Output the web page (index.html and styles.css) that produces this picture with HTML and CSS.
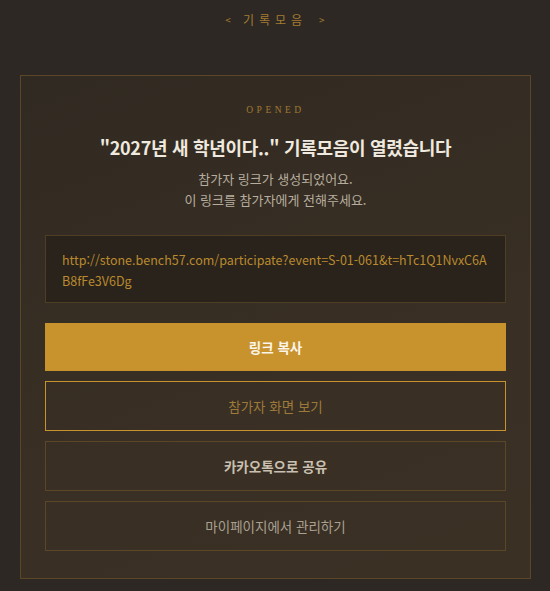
FILE: index.html
```html
<!DOCTYPE html>
<html lang="ko">
<head>
<meta charset="utf-8">
<link rel="stylesheet" href="styles.css">
</head>
<body>
<div class="page">
  <div class="topnav"><span class="arrow">&lt;</span>기록모음<span class="arrow">&gt;</span></div>
  <div class="card">
    <div class="eyebrow">OPENED</div>
    <h1 class="title">"2027년 새 학년이다.." 기록모음이 열렸습니다</h1>
    <p class="desc">참가자 링크가 생성되었어요.<br>이 링크를 참가자에게 전해주세요.</p>
    <div class="linkbox">http://stone.bench57.com/participate?event=S-01-061&amp;t=hTc1Q1NvxC6AB8fFe3V6Dg</div>
    <div class="actions">
      <button class="btn btn-primary">링크 복사</button>
      <button class="btn btn-outline">참가자 화면 보기</button>
      <button class="btn btn-muted btn-bold">카카오톡으로 공유</button>
      <button class="btn btn-muted">마이페이지에서 관리하기</button>
    </div>
  </div>
</div>
</body>
</html>
```
FILE: styles.css
```css
* { box-sizing: border-box; }
html, body { margin: 0; padding: 0; }
body {
  background: #2d2823;
  font-family: "Noto Sans CJK KR", "Noto Sans", sans-serif;
  width: 550px;
  height: 591px;
  overflow: hidden;
}
.page {
  padding: 10px 20px 0 20px;
}
.topnav {
  display: flex;
  justify-content: center;
  align-items: flex-start;
  gap: 12px;
  color: #a47c31;
  font-size: 12px;
  letter-spacing: 5px;
  line-height: 20px;
  height: 65px;
}
.topnav .arrow {
  font-size: 10px;
  letter-spacing: 0;
}
.card {
  border: 1px solid #5b4627;
  background: linear-gradient(160deg, #312a22 0%, #392f24 60%, #3a3024 100%);
  padding: 24px 24px 28px 24px;
  width: 511px;
  height: 504px;
  overflow: hidden;
}
.eyebrow {
  text-align: center;
  font-family: "Liberation Serif", "DejaVu Serif", serif;
  font-size: 9.5px;
  letter-spacing: 3.5px;
  color: #a07930;
  line-height: 12px;
  margin-top: 4px;
}
.title {
  text-align: center;
  margin: 19px 0 0 0;
  font-size: 18px;
  line-height: 24px;
  font-weight: 700;
  color: #efe9df;
  letter-spacing: -0.3px;
}
.desc {
  text-align: center;
  margin: 9px 0 0 0;
  font-size: 13px;
  line-height: 21px;
  color: #b7ad9e;
}
.linkbox {
  margin-top: 25px;
  height: 68px;
  background: #2a231c;
  border: 1px solid #4f3e23;
  padding: 13px 16px;
  font-size: 12.5px;
  line-height: 21px;
  color: #b98a2e;
  word-break: break-all;
}
.actions {
  margin-top: 20px;
  display: flex;
  flex-direction: column;
  gap: 10px;
}
.btn {
  display: block;
  width: 100%;
  height: 50px;
  font-family: inherit;
  font-size: 13.5px;
  background: transparent;
  border: 1px solid #5b4627;
  color: #a9a091;
  cursor: pointer;
  flex: none;
}
.btn-primary {
  height: 48px;
  background: #c8922d;
  border-color: #c8922d;
  color: #fbf5ea;
  font-weight: 700;
}
.btn-outline {
  border: 1px solid #c8922d;
  color: #9d7a3a;
}
.btn-bold {
  font-weight: 700;
  color: #c9c0b1;
}
```
